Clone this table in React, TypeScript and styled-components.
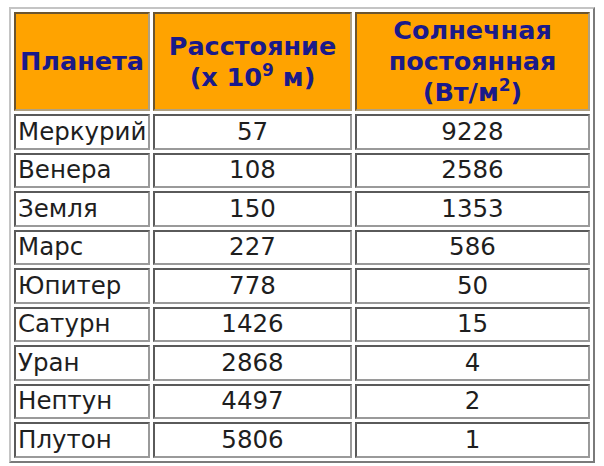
import { ReactElement } from 'react'
import styled, { createGlobalStyle } from 'styled-components'

const GlobalStyle = createGlobalStyle`
  html, body {
    margin: 0;
    padding: 0;
    background: #ffffff;
  }
`

const Page = styled.div`
  padding: 7px 9px;
  font-family: 'DejaVu Sans', Verdana, sans-serif;
`

const Table = styled.table`
  width: 586px;
  border-collapse: separate;
  border-spacing: 3px;
  border-style: solid;
  border-width: 2px;
  border-color: #c4c4c4 #7a7a7a #7a7a7a #c4c4c4;
  table-layout: fixed;
`

const HeadCell = styled.th<{ $width: number }>`
  width: ${(p) => p.$width}px;
  height: 99px;
  padding: 0 2px;
  box-sizing: border-box;
  background: #ffa300;
  color: #1a1a8a;
  font-size: 25.5px;
  font-weight: bold;
  line-height: 31px;
  text-align: center;
  vertical-align: middle;
  white-space: nowrap;
  border-style: solid;
  border-width: 2px;
  border-color: #6b5530 #b0a080 #b0a080 #6b5530;
`

const Cell = styled.td<{ $align?: 'left' | 'center' }>`
  height: 35.5px;
  padding: 0 2px;
  box-sizing: border-box;
  background: #ffffff;
  color: #1e1e1e;
  font-size: 24.5px;
  line-height: 28px;
  text-align: ${(p) => p.$align ?? 'center'};
  vertical-align: middle;
  white-space: nowrap;
  border-style: solid;
  border-width: 2px;
  border-color: #5a5a5a #9a9a9a #9a9a9a #5a5a5a;
`

const Sup = styled.sup`
  font-size: 17px;
  line-height: 0;
  vertical-align: 10px;
`

const planets: [string, number, number][] = [
  ['Меркурий', 57, 9228],
  ['Венера', 108, 2586],
  ['Земля', 150, 1353],
  ['Марс', 227, 586],
  ['Юпитер', 778, 50],
  ['Сатурн', 1426, 15],
  ['Уран', 2868, 4],
  ['Нептун', 4497, 2],
  ['Плутон', 5806, 1]
]

export default function App(): ReactElement {
  return (
    <Page>
      <GlobalStyle />
      <Table>
        <thead>
          <tr>
            <HeadCell $width={136}>Планета</HeadCell>
            <HeadCell $width={199}>
              Расстояние
              <br />
              (x 10<Sup>9</Sup> м)
            </HeadCell>
            <HeadCell $width={235}>
              Солнечная
              <br />
              постоянная
              <br />
              (Вт/м<Sup>2</Sup>)
            </HeadCell>
          </tr>
        </thead>
        <tbody>
          {planets.map(([name, dist, solar]) => (
            <tr key={name}>
              <Cell $align="left">{name}</Cell>
              <Cell>{dist}</Cell>
              <Cell>{solar}</Cell>
            </tr>
          ))}
        </tbody>
      </Table>
    </Page>
  )
}
